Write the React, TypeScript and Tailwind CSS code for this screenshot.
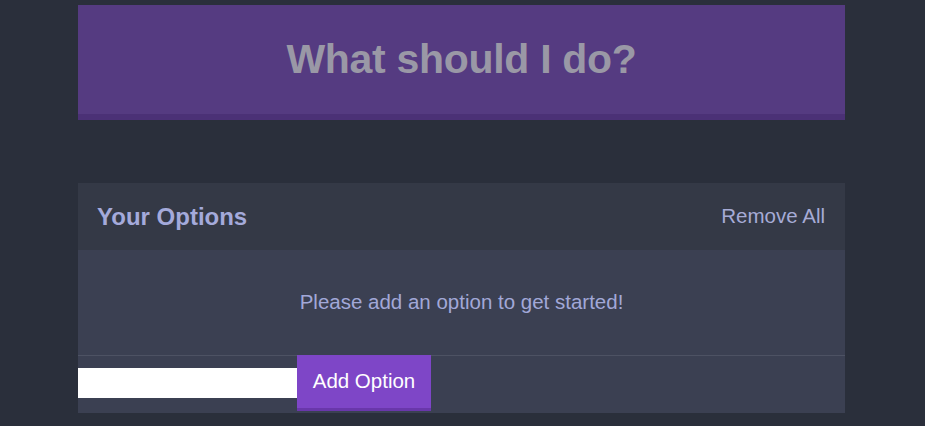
import React from 'react';

const App: React.FC = () => {
  return (
    <div
      className="min-h-screen w-full bg-[#2a2f3b] pt-[5px]"
      style={{ fontFamily: '"Liberation Sans", Arial, sans-serif' }}
    >
      <div className="ml-[78px] w-[767px]">
        <div className="h-[115px] flex items-center justify-center bg-[#553b81] border-b-[6px] border-[#4b3176]">
          <h1 className="text-[41px] font-bold text-[#9a98a6] tracking-[-0.3px] mt-[1px]">What should I do?</h1>
        </div>

        <div className="mt-[63px] bg-[#3b4052]">
          <div className="h-[67px] flex items-center justify-between pl-[19px] pr-[20px] bg-[#343946]">
            <h3 className="text-[24px] font-bold text-[#a4aadb]">Your Options</h3>
            <button className="text-[20.5px] text-[#a6abd6]">Remove All</button>
          </div>
          <div className="h-[106px] flex items-center justify-center border-b border-[#4d5263]">
            <p className="text-[20.5px] text-[#a2a8d8]">Please add an option to get started!</p>
          </div>
          <form className="h-[57px] flex items-start">
            <input
              type="text"
              className="mt-[12px] h-[30px] w-[219px] bg-white border-0 outline-none"
            />
            <button
              type="button"
              className="-mt-px h-[56px] w-[134px] bg-[#7e46c7] border-b-[3px] border-[#6937aa] text-white text-[20.5px]"
            >
              Add Option
            </button>
          </form>
        </div>
      </div>
    </div>
  );
};

export default App;
